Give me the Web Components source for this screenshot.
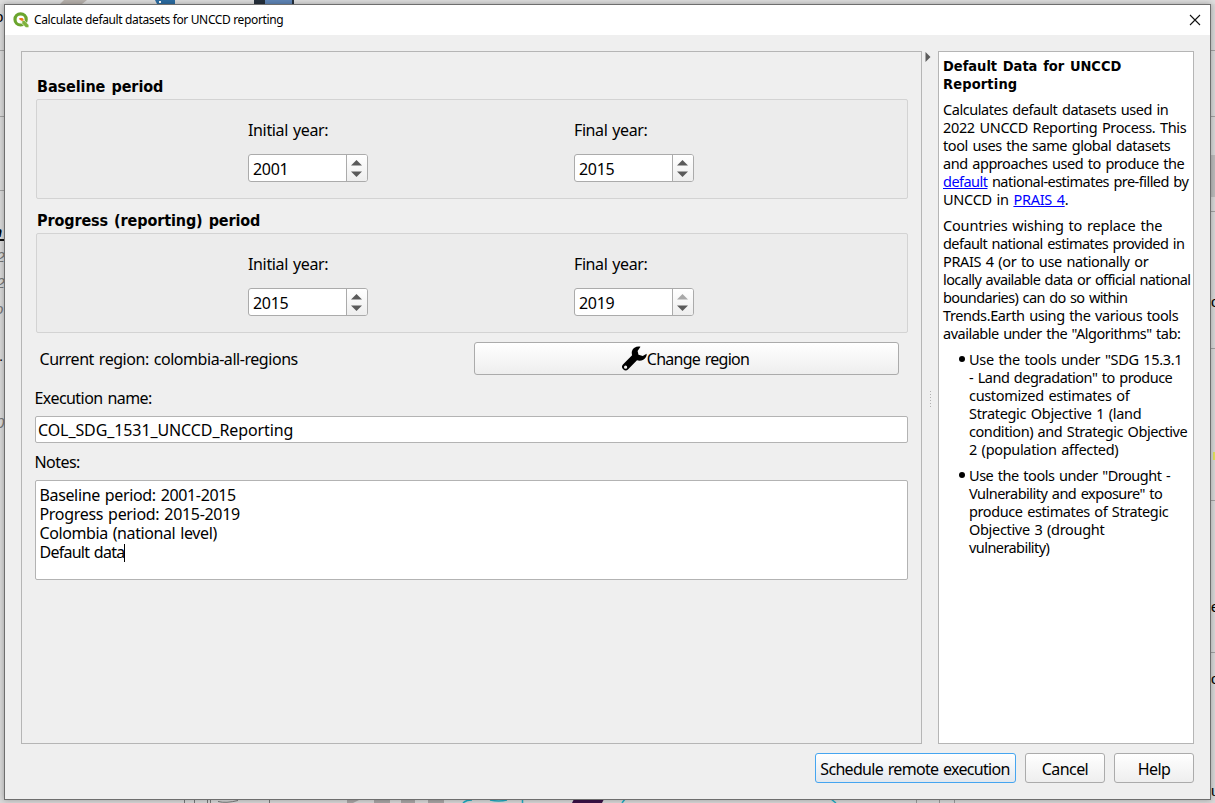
<!DOCTYPE html>
<html lang="en">
<head>
<meta charset="utf-8">
<title>Calculate default datasets for UNCCD reporting</title>
<style>
html,body{margin:0;height:100%;overflow:hidden;background:#d6d6d6}
body{font:16px/20px "Noto Sans",sans-serif;color:#000}
</style>
</head>
<body>
<app-root></app-root>
<script>
const define=(name,html,ready)=>{
  const t=document.createElement('template');
  t.innerHTML=html;
  customElements.define(name,class extends HTMLElement{
    connectedCallback(){
      if(this.shadowRoot)return;
      this.attachShadow({mode:'open'}).append(t.content.cloneNode(true));
      if(ready)ready(this,this.shadowRoot);
    }
  });
};

// A single line of text, tracked so that it takes the width given in "w".
define('t-line',`<style>:host{display:block;width:max-content;white-space:pre;word-spacing:1.200px}</style><slot></slot>`,el=>{
  const w=+el.getAttribute('w');
  if(!w)return;
  const n=el.textContent.length, nat=el.getBoundingClientRect().width;
  el.style.letterSpacing=((w+.3-nat)/n).toFixed(3)+'px';
});

define('back-window',`<style>
:host{display:block;position:absolute;inset:0;overflow:hidden}
svg{display:block}
</style>
<svg width="1215" height="803" viewBox="0 0 1215 803">
<rect width="1215" height="803" fill="#d9d9d9"/>
<rect width="1215" height="4" fill="#dedede"/>
<path d="M60 4l4-4h23l-5 4z" fill="#b9b3ae"/>
<path d="M155 0h20v4h-18z" fill="#2c6da3"/><rect x="159" y="1" width="2" height="2" fill="#fff"/>
<rect x="254" width="40" height="4" fill="#26303c"/><rect x="265" width="27" height="4" fill="#5f86b8"/>
<g stroke="#a3a3a3"><path d="M0 50.5h5M0 116.5h5M0 190.5h5"/><path d="M1210 50.5h5M1210 116.5h5M1210 211.5h5M1210 348.5h5M1210 500.5h5M1210 652.5h5"/></g>
<rect x="1210" y="155" width="5" height="42" fill="#bdbdbd"/>
<rect y="239" width="4" height="2" fill="#111"/>
<rect x="1213" y="452" width="2" height="8" fill="#e3e35c"/>
<g font-family="Liberation Sans" font-size="15"><text x="-5" y="22">o</text><text x="-7" y="237" font-weight="bold" font-style="italic">n</text>
<g fill="#777" font-style="italic"><text x="-3.500" y="262">2</text><text x="-3.500" y="288">2</text><text x="-5" y="314">o</text><text x="-4" y="428">0</text></g><text x="-1" y="361">.</text>
<text x="1211" y="307">c</text><text x="1211" y="612">e</text><text x="1211" y="684">c</text><text x="1211" y="796">u</text></g>
<g fill="none" stroke="#777"><path d="M184.5 800v3M194.5 800v3M207.500 800v3M210.500 800v3M269.500 800v3M218 801.500q8 2 20-1"/></g>
<g fill="#a9a6a6"><path d="M347 800h12l-6 3h-6zM374 800h16v3h-16zM401 800h14v3h-14zM428 800h16v3h-16z"/></g>
<path d="M574 799h30l-2 4h-30z" fill="#3b1247"/>
<g fill="none" stroke="#20adc4" stroke-width="1.500"><path d="M463 803q3-3 9-3M490 800q9 2 17 0M522.500 799v4M622 803l3-4M831 799l5 4"/></g>
<g stroke="#999"><path d="M916.500 800v3M939.500 800v3M954.500 800v3"/></g>
</svg>`);

define('q-logo',`<style>:host{display:block;width:16px;height:16px;flex:none}svg{display:block}</style>
<svg width="16" height="16" viewBox="0 0 16 16"><circle cx="7.600" cy="7.400" r="5.600" fill="none" stroke="#6ba52e" stroke-width="3.200"/><path d="M7.300 7.200h3.200l5 5.300v2.700h-3.300L7.300 10.300z" fill="#eef5e6"/><path d="M9.300 9.100h2.300l3.900 4v2.100h-2.600L9.300 11.500z" fill="#7fb23b"/><path d="M6.300 5.900h3l1.200 1.200v1.700H8.600L6.300 7.400z" fill="#ee7913"/></svg>`);

define('title-bar',`<style>
:host{display:flex;height:30px;background:#fff;align-items:center;padding:0 9px 0 8px;font-size:12px;line-height:16px}
.t{margin-left:5px;flex:1}.x{display:block}
t-line{word-spacing:0}
</style><q-logo></q-logo><div class="t"><t-line w="249">Calculate default datasets for UNCCD reporting</t-line></div>
<svg class="x" width="12" height="12" viewBox="0 0 12 12"><path d="M1 1l10 10M11 1L1 11" stroke="#111" stroke-width="1.100"/></svg>`);

define('spin-box',`<style>
:host{display:flex;box-sizing:border-box;width:120px;height:28px;border:1px solid #ababab;border-radius:3px;background:#fff;overflow:hidden}
.v{flex:1;padding:4px 0 0 4px}
.b{width:20px;border-left:1px solid #ababab;background:linear-gradient(#fff,#eee);display:flex;flex-direction:column;align-items:center}
svg{display:block;margin:5px 1px 0 0}
path{fill:#5a5a5a}
:host([max]) .up{fill:#a8a8a8}
t-line{letter-spacing:-.3px}
</style><div class="v"><t-line><slot></slot></t-line></div>
<div class="b"><svg width="11" height="18" viewBox="0 0 11 18"><path class="up" d="M0 5.500L5.500 0l5.500 5.500z"/><path d="M0 11.500h11L5.500 17z"/></svg></div>`);

define('year-field',`<style>:host{display:flex;flex-direction:column;gap:14px}</style><slot name="label"></slot><slot></slot>`);

define('period-group',`<style>
:host{display:block}
.h{font:bold 16px/20px "DejaVu Sans Condensed","DejaVu Sans",sans-serif;font-stretch:condensed;padding:1px 0 0 2px;height:22px}
.box{box-sizing:border-box;height:100px;border:1px solid #d3d3d3;border-radius:2px;background:#ececec;display:grid;grid-template-columns:326px 1fr;padding:20px 0 0 211px;margin-left:1px}
</style><div class="h"><slot name="head"></slot></div><div class="box"><slot></slot></div>`);

define('push-button',`<style>
:host{display:flex;box-sizing:border-box;height:30px;border:1px solid #ababab;border-radius:3px;background:linear-gradient(#fff,#eee);align-items:center;justify-content:center}
:host([primary]){border-color:#45a5f0;background:linear-gradient(#fff,#e3e8ee)}
</style><slot></slot>`);

define('wrench-icon',`<style>:host{display:block;width:25px;height:25px;flex:none}svg{display:block}</style>
<svg width="25" height="25" viewBox="0 0 25 25"><path fill-rule="evenodd" d="M18.500 0.700C15 -.2 11 1.500 10 5c-.5 1.700-.2 3 .1 4.200L1.200 18.200a3.500 3.500 0 1 0 5 5L15 14.300c3.500 1 7.500-.3 9-3.300.6-1.200.7-2.200.6-3.300l-3.800 2.200-4.300-1.200-.9-3.800zM3.600 19.600a1.600 1.600 0 1 1 0 3.200 1.600 1.600 0 0 1 0-3.200z"/></svg>`);

define('text-field',`<style>:host{display:block;box-sizing:border-box;border:1px solid #b3b3b3;border-radius:2px;background:#fff}</style><slot></slot>`);

define('main-form',`<style>
:host{display:block;box-sizing:border-box;width:901px;height:693px;border:1px solid #b5b5b5;padding:24px 13px 0 13px}
period-group{margin-bottom:11px}
.region{display:flex;align-items:center;height:33px;padding:0 9px 0 4.500px;margin-top:-2px;justify-content:space-between}
.region push-button{width:425px;height:33px;padding-right:2px}
.lab{margin:13px 0 8px -.5px}
.name{height:27px;padding:3px 2px}
.lab2{margin:9px 0 8px -.5px}
.notes{height:100px;padding:5px 3.500px;line-height:19px}
.row{display:flex;align-items:center}
.caret{width:1px;height:18px;background:#000}
</style>
<period-group><t-line slot="head" w="126">Baseline period</t-line>
<year-field><t-line slot="label" w="80">Initial year:</t-line><spin-box>2001</spin-box></year-field>
<year-field><t-line slot="label" w="73">Final year:</t-line><spin-box>2015</spin-box></year-field></period-group>
<period-group><t-line slot="head" w="223">Progress (reporting) period</t-line>
<year-field><t-line slot="label" w="80">Initial year:</t-line><spin-box>2015</spin-box></year-field>
<year-field><t-line slot="label" w="73">Final year:</t-line><spin-box max>2019</spin-box></year-field></period-group>
<div class="region"><t-line w="258">Current region: colombia-all-regions</t-line><push-button><wrench-icon></wrench-icon><t-line w="102">Change region</t-line></push-button></div>
<t-line class="lab" w="117">Execution name:</t-line>
<text-field class="name"><t-line w="255">COL_SDG_1531_UNCCD_Reporting</t-line></text-field>
<t-line class="lab2" w="45">Notes:</t-line>
<text-field class="notes"><t-line w="196">Baseline period: 2001-2015</t-line><t-line w="200">Progress period: 2015-2019</t-line><t-line w="177">Colombia (national level)</t-line><div class="row"><t-line w="84.6">Default data</t-line><div class="caret"></div></div></text-field>`);

define('pane-splitter',`<style>
:host{display:flex;width:16px;flex-direction:column;align-items:center}
svg{display:block}.g{margin-top:327px}
</style><svg width="16" height="12" viewBox="0 0 16 12"><path d="M3.500 1v10l5-5z" fill="#5c5c5c"/></svg>
<svg class="g" width="16" height="18" viewBox="0 0 16 18"><path d="M8.500 1v17" stroke="#b0b0b0" stroke-dasharray="1 2"/></svg>`);

define('help-pane',`<style>
:host{display:block;box-sizing:border-box;width:256px;height:693px;border:1px solid #b5b5b5;background:#fff;padding:5px 4px;font-size:14.500px;line-height:18px}
.h{font-family:"DejaVu Sans Condensed","DejaVu Sans",sans-serif;font-stretch:condensed;font-weight:bold}
p{margin:8px 0 0}
.h + p{margin-top:7px}
a{color:#00f;text-decoration:underline}
.li{display:flex;margin:8px 0 0 16px}
.li svg{display:block;width:10px;height:18px;flex:none}
</style>
<div class="h"><t-line w="178">Default Data for UNCCD</t-line><t-line w="74">Reporting</t-line></div>
<p><t-line w="225">Calculates default datasets used in</t-line><t-line w="243">2022 UNCCD Reporting Process. This</t-line><t-line w="227">tool uses the same global datasets</t-line><t-line w="241">and approaches used to produce the</t-line><t-line w="245"><a>default</a> national-estimates pre-filled by</t-line><t-line w="125">UNCCD in <a>PRAIS 4</a>.</t-line></p>
<p><t-line w="219">Countries wishing to replace the</t-line><t-line w="241">default national estimates provided in</t-line><t-line w="205">PRAIS 4 (or to use nationally or</t-line><t-line w="247">locally available data or official national</t-line><t-line w="184">boundaries) can do so within</t-line><t-line w="235">Trends.Earth using the various tools</t-line><t-line w="237">available under the "Algorithms" tab:</t-line></p>
<div class="li"><svg viewBox="0 0 10 18"><circle cx="3" cy="9" r="3"/></svg><div><t-line w="213">Use the tools under "SDG 15.3.1</t-line><t-line w="203">- Land degradation" to produce</t-line><t-line w="160">customized estimates of</t-line><t-line w="172">Strategic Objective 1 (land</t-line><t-line w="218">condition) and Strategic Objective</t-line><t-line w="149">2 (population affected)</t-line></div></div>
<div class="li"><svg viewBox="0 0 10 18"><circle cx="3" cy="9" r="3"/></svg><div><t-line w="201">Use the tools under "Drought -</t-line><t-line w="193">Vulnerability and exposure" to</t-line><t-line w="199">produce estimates of Strategic</t-line><t-line w="135">Objective 3 (drought</t-line><t-line w="80">vulnerability)</t-line></div></div>`);

define('dialog-window',`<style>
:host{display:flex;flex-direction:column;position:relative;box-sizing:border-box;width:1207px;height:796px;border:1px solid #6e6e6e;background:#efefef;box-shadow:0 0 6px rgba(0,0,0,.3)}
.mid{display:flex;padding:16px 0 0 16px}
.foot{display:flex;justify-content:flex-end;gap:9px;padding:9px 16px 0 0}
.foot push-button{width:80px;padding-top:2px}
.foot push-button[primary]{width:201px;padding-right:1px}
</style><title-bar></title-bar>
<div class="mid"><main-form></main-form><pane-splitter></pane-splitter><help-pane></help-pane></div>
<div class="foot"><push-button primary><t-line w="189">Schedule remote execution</t-line></push-button><push-button><t-line w="46">Cancel</t-line></push-button><push-button><t-line w="32">Help</t-line></push-button></div>`);

define('app-root',`<style>:host{display:block;position:relative;box-sizing:border-box;width:1215px;height:803px;padding:4px;overflow:hidden}</style><back-window></back-window><dialog-window></dialog-window>`);
</script>
</body>
</html>
